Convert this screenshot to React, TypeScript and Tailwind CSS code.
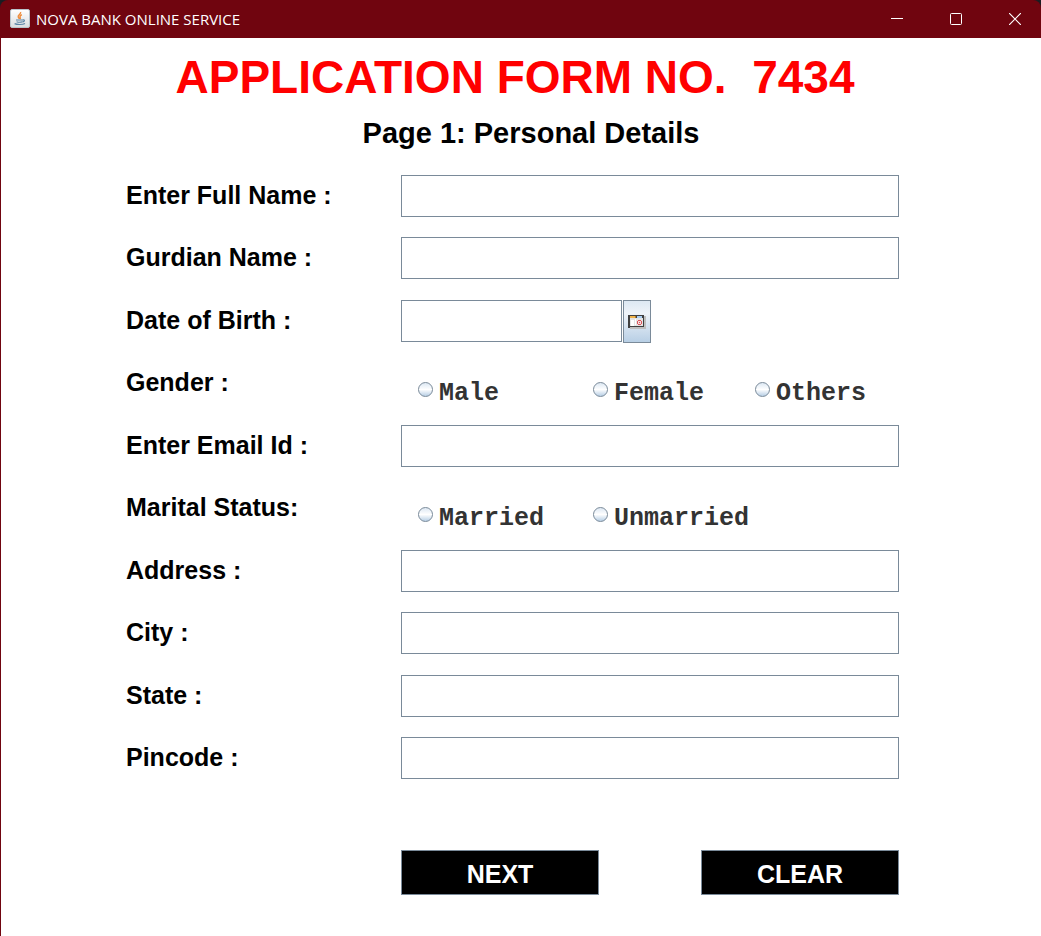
import { useState } from "react";
import type { ReactNode } from "react";

const fieldClass =
  "h-[42px] w-full border border-[#7a8a99] bg-white px-2 font-['Liberation_Sans',Arial,sans-serif] text-xl text-black outline-none focus:border-[#6382bf]";

function JavaIcon() {
  return (
    <svg width="20" height="20" viewBox="0 0 20 20" aria-hidden="true">
      <defs>
        <linearGradient id="tile" x1="0" y1="0" x2="0" y2="1">
          <stop offset="0" stopColor="#ffffff" />
          <stop offset="1" stopColor="#d9dcdf" />
        </linearGradient>
      </defs>
      <rect x="0.5" y="0.5" width="19" height="18" rx="1.5" fill="url(#tile)" stroke="#b9c4cb" />
      <path d="M10.6 3c.8 2-3.2 3-2.4 5 .3.8 1.2 1.2 1.3 2M11.8 5.6c-1.5.8-2.2 1.6-1.7 2.6.4.8.4 1.2 0 1.8" fill="none" stroke="#ee8b3a" strokeWidth="1.4" />
      <path d="M6 11h7.2M6.6 12.7c1.8.6 4.4.6 5.8 0M13 10.8c2-.4 1.8 1.7-.4 2.1M4.6 14.6c2.4 1.2 8 1.2 10.4-.2" fill="none" stroke="#5b84a6" strokeWidth="1.2" />
    </svg>
  );
}

function CalendarIcon() {
  return (
    <svg width="18" height="14" viewBox="0 0 18 14" shapeRendering="crispEdges" aria-hidden="true">
      <rect x="2" y="1" width="16" height="13" fill="#bfbfbf" />
      <rect x="0" y="0" width="16" height="12" fill="#404040" />
      <rect x="0" y="12" width="2" height="1" fill="#404040" />
      <rect x="2" y="1" width="5" height="2" fill="#f0b44c" />
      <rect x="7" y="1" width="1" height="2" fill="#b07828" />
      <rect x="9" y="1" width="5" height="2" fill="#a9cdf2" />
      <rect x="2" y="3" width="13" height="8" fill="#e4e4e4" />
      <rect x="3" y="5" width="3" height="6" fill="#ffffff" />
      <rect x="7" y="4" width="1" height="6" fill="#ffffff" />
      <rect x="9" y="5" width="5" height="5" fill="#f6dada" />
      <path d="M10 5h3v1h1v3h-1v1h-3v-1h-1v-3h1zM10 6v3h3v-3zM11 7h1v1h-1z" fill="#d9575c" fillRule="evenodd" />
    </svg>
  );
}

function Row({ label, htmlFor, children }: { label: string; htmlFor?: string; children: ReactNode }) {
  const text = "pt-1.5 text-[25px] leading-7 font-bold";
  return (
    <div className="grid grid-cols-[275px_minmax(0,1fr)] odd:h-[62px] even:h-[63px]">
      {htmlFor ? (
        <label htmlFor={htmlFor} className={text}>{label}</label>
      ) : (
        <span className={text}>{label}</span>
      )}
      <div>{children}</div>
    </div>
  );
}

function TextRow({ id, label }: { id: string; label: string }) {
  return (
    <Row label={label} htmlFor={id}>
      <input id={id} name={id} type="text" className={fieldClass} />
    </Row>
  );
}

function Choices({ name, options }: { name: string; options: string[] }) {
  return (
    <div role="radiogroup" aria-label={name} className="grid grid-cols-[175px_162px_auto] pt-5 pl-[17px]">
      {options.map((option) => (
        <label
          key={option}
          className="flex gap-1.5 font-['Liberation_Mono','Courier_New',monospace] text-[25px] leading-6 font-bold whitespace-nowrap text-[#333333]"
        >
          <input
            type="radio"
            name={name}
            value={option}
            className="size-[15px] shrink-0 appearance-none rounded-full border border-[#7a8a99] bg-linear-to-b from-[#dde8f3] via-white to-[#b8cfe5] checked:bg-none checked:bg-[#333333]"
          />
          {option}
        </label>
      ))}
    </div>
  );
}

const buttonClass =
  "h-[45px] w-[198px] border border-[#7a8a99] bg-black pt-1 text-[25px] leading-none font-bold text-white";

const controlClass = "grid w-[52px] place-items-center";

export default function App() {
  const [open, setOpen] = useState(false);
  return (
    <div className="flex min-h-screen flex-col bg-[#1a1d22] font-['Liberation_Sans',Arial,sans-serif] text-black">
      <header className="flex h-[38px] items-center rounded-t-lg bg-[#70050f] pl-2.5 text-white">
        <JavaIcon />
        <span className="ml-1.5 grow font-['Open_Sans','Noto_Sans',sans-serif] text-[15px]">NOVA BANK ONLINE SERVICE</span>
        <div className="flex gap-[7px] self-stretch">
          <button type="button" aria-label="Minimize" className={controlClass}>
            <svg width="12" height="12" viewBox="0 0 12 12" fill="none" stroke="white"><path d="M0 5.5h12" /></svg>
          </button>
          <button type="button" aria-label="Maximize" className={controlClass}>
            <svg width="12" height="12" viewBox="0 0 12 12" fill="none" stroke="white"><rect x="0.5" y="0.5" width="11" height="11" rx="1" /></svg>
          </button>
          <button type="button" aria-label="Close" className={controlClass}>
            <svg width="12" height="12" viewBox="0 0 12 12" fill="none" stroke="white" strokeWidth="1.2"><path d="M0 0l12 12M12 0L0 12" /></svg>
          </button>
        </div>
      </header>
      <main className="grow border-l border-[#70050f] bg-white">
        <h1 className="pt-3 pr-3 text-center text-[46px] leading-[54px] font-bold whitespace-pre text-[#ff0000]">{"APPLICATION FORM NO.  7434"}</h1>
        <h2 className="mt-[13px] pl-5 text-center text-[29px] leading-8 font-bold">Page 1: Personal Details</h2>
        <form className="pt-[26px] pr-[142px] pb-10 pl-[125px]" onSubmit={(e) => e.preventDefault()}>
          <div>
            <TextRow id="full-name" label="Enter Full Name :" />
            <TextRow id="guardian" label="Gurdian Name :" />
            <Row label="Date of Birth :" htmlFor="birth">
              <div className="flex gap-px">
                <div className="w-[221px]">
                  <input id="birth" name="birth" type="text" className={fieldClass} />
                </div>
                <button
                  type="button"
                  aria-label="Choose date"
                  aria-pressed={open}
                  onClick={() => setOpen(!open)}
                  className="grid h-[43px] w-7 place-items-center border border-[#7a8a99] bg-linear-to-b from-[#dde8f3] via-[#eef3f9] via-30% to-[#b8cfe5]"
                >
                  <CalendarIcon />
                </button>
              </div>
            </Row>
            <Row label="Gender :"><Choices name="gender" options={["Male", "Female", "Others"]} /></Row>
            <TextRow id="email" label="Enter Email Id :" />
            <Row label="Marital Status:"><Choices name="marital" options={["Married", "Unmarried"]} /></Row>
            <TextRow id="address" label="Address :" />
            <TextRow id="city" label="City :" />
            <TextRow id="state" label="State :" />
            <TextRow id="pincode" label="Pincode :" />
          </div>
          <div className="mt-[50px] flex justify-between pl-[275px]">
            <button type="submit" className={buttonClass}>NEXT</button>
            <button type="reset" className={buttonClass}>CLEAR</button>
          </div>
        </form>
      </main>
    </div>
  );
}
